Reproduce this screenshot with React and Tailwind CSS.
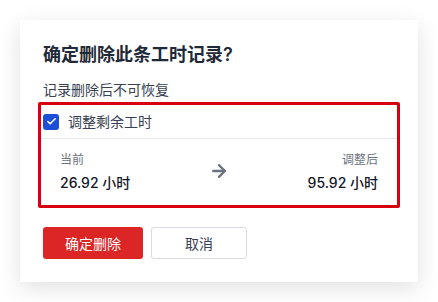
import { ArrowRight, Check } from "lucide-react";

export default function App() {
  return (
    <div
      className="w-[438px] h-[302px] bg-white p-[20px]"
      style={{ fontFamily: "Inter, 'Noto Sans CJK SC', sans-serif" }}
    >
      <div className="w-[398px] h-[262px] bg-white shadow-[0_6px_22px_rgba(0,0,0,0.12)] px-[23px] pt-[21px]">
        <h1 className="text-[18px] leading-7 font-semibold text-[#1f2937]">确定删除此条工时记录?</h1>
        <p className="mt-[11px] text-[14px] leading-5 text-[#374151]">记录删除后不可恢复</p>

        {/* highlighted box */}
        <div className="mt-[2px] ml-[-5px] w-[362px] border-[3px] border-[#d7000f] rounded-[2px]">
          <div className="flex items-center gap-[9px] pl-[2px] h-[33px]">
            <span className="w-[16px] h-[16px] rounded-[3px] bg-[#1c4fd8] flex items-center justify-center">
              <Check size={11} strokeWidth={3.5} className="text-white" />
            </span>
            <span className="text-[14px] text-[#374151]">调整剩余工时</span>
          </div>
          <div className="border-t border-[#e8eaee] flex justify-between px-[19px] pt-[13px] h-[67px]">
            <div>
              <div className="text-[12px] leading-4 text-[#6b7280]">当前</div>
              <div className="mt-[5px] text-[14px] leading-5 font-medium text-[#111827]">26.92 小时</div>
            </div>
            <ArrowRight size={20} strokeWidth={2.8} className="text-[#6b7280] mt-[9px]" />
            <div className="text-right">
              <div className="text-[12px] leading-4 text-[#6b7280]">调整后</div>
              <div className="mt-[5px] text-[14px] leading-5 font-medium text-[#111827]">95.92 小时</div>
            </div>
          </div>
        </div>

        <div className="flex gap-[8px] mt-[19px]">
          <button className="w-[100px] h-[32px] rounded-[3px] bg-[#dc2626] text-white text-[14px]">确定删除</button>
          <button className="w-[96px] h-[32px] rounded-[3px] border border-[#d7dbe0] bg-white text-[#374151] text-[14px]">取消</button>
        </div>
      </div>
    </div>
  );
}
